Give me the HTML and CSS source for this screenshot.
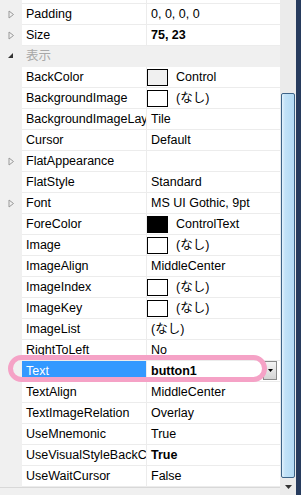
FILE: index.html
```html
<!DOCTYPE html>
<html lang="ja">

<head>
    <meta charset="UTF-8" />
    <title>Properties</title>
    <link rel="stylesheet" href="styles.css">
</head>

<body>
    <div class="window">
        <div class="grid">
            <div class="rows">
                <div class="row partial">
                    <span class="gutter"></span>
                    <span class="name"></span>
                    <span class="value"></span>
                </div>
                <div class="row">
                    <span class="gutter"><svg class="expander" width="7" height="9" viewBox="0 0 7 9"><polygon points="1,1 5.5,4.5 1,8" /></svg></span>
                    <span class="name">Padding</span>
                    <span class="value">0, 0, 0, 0</span>
                </div>
                <div class="row">
                    <span class="gutter"><svg class="expander" width="7" height="9" viewBox="0 0 7 9"><polygon points="1,1 5.5,4.5 1,8" /></svg></span>
                    <span class="name">Size</span>
                    <span class="value bold">75, 23</span>
                </div>
                <div class="row category">
                    <span class="gutter"><svg class="collapser" width="6" height="6" viewBox="0 0 6 6"><polygon points="5,0 5,5 0,5" /></svg></span>
                    <span class="catname">表示</span>
                </div>
                <div class="row">
                    <span class="gutter"></span>
                    <span class="name">BackColor</span>
                    <span class="value"><i class="swatch control"></i>Control</span>
                </div>
                <div class="row">
                    <span class="gutter"></span>
                    <span class="name">BackgroundImage</span>
                    <span class="value"><i class="swatch"></i>(なし)</span>
                </div>
                <div class="row">
                    <span class="gutter"></span>
                    <span class="name">BackgroundImageLayout</span>
                    <span class="value">Tile</span>
                </div>
                <div class="row">
                    <span class="gutter"></span>
                    <span class="name">Cursor</span>
                    <span class="value">Default</span>
                </div>
                <div class="row">
                    <span class="gutter"><svg class="expander" width="7" height="9" viewBox="0 0 7 9"><polygon points="1,1 5.5,4.5 1,8" /></svg></span>
                    <span class="name">FlatAppearance</span>
                    <span class="value"></span>
                </div>
                <div class="row">
                    <span class="gutter"></span>
                    <span class="name">FlatStyle</span>
                    <span class="value">Standard</span>
                </div>
                <div class="row">
                    <span class="gutter"><svg class="expander" width="7" height="9" viewBox="0 0 7 9"><polygon points="1,1 5.5,4.5 1,8" /></svg></span>
                    <span class="name">Font</span>
                    <span class="value">MS UI Gothic, 9pt</span>
                </div>
                <div class="row">
                    <span class="gutter"></span>
                    <span class="name">ForeColor</span>
                    <span class="value"><i class="swatch black"></i>ControlText</span>
                </div>
                <div class="row">
                    <span class="gutter"></span>
                    <span class="name">Image</span>
                    <span class="value"><i class="swatch"></i>(なし)</span>
                </div>
                <div class="row">
                    <span class="gutter"></span>
                    <span class="name">ImageAlign</span>
                    <span class="value">MiddleCenter</span>
                </div>
                <div class="row">
                    <span class="gutter"></span>
                    <span class="name">ImageIndex</span>
                    <span class="value"><i class="swatch"></i>(なし)</span>
                </div>
                <div class="row">
                    <span class="gutter"></span>
                    <span class="name">ImageKey</span>
                    <span class="value"><i class="swatch"></i>(なし)</span>
                </div>
                <div class="row">
                    <span class="gutter"></span>
                    <span class="name">ImageList</span>
                    <span class="value">(なし)</span>
                </div>
                <div class="row">
                    <span class="gutter"></span>
                    <span class="name">RightToLeft</span>
                    <span class="value">No</span>
                </div>
                <div class="row selected">
                    <span class="gutter"></span>
                    <span class="name">Text</span>
                    <span class="value bold">button1<span class="dropBtn"><svg width="5" height="3" viewBox="0 0 5 3"><polygon points="0,0 5,0 2.5,3" /></svg></span></span>
                </div>
                <div class="row">
                    <span class="gutter"></span>
                    <span class="name">TextAlign</span>
                    <span class="value">MiddleCenter</span>
                </div>
                <div class="row">
                    <span class="gutter"></span>
                    <span class="name">TextImageRelation</span>
                    <span class="value">Overlay</span>
                </div>
                <div class="row">
                    <span class="gutter"></span>
                    <span class="name">UseMnemonic</span>
                    <span class="value">True</span>
                </div>
                <div class="row">
                    <span class="gutter"></span>
                    <span class="name">UseVisualStyleBackColor</span>
                    <span class="value bold">True</span>
                </div>
                <div class="row">
                    <span class="gutter"></span>
                    <span class="name">UseWaitCursor</span>
                    <span class="value">False</span>
                </div>
            </div>
            <div class="footer"></div>
            <!-- pink annotation drawn over the Text row -->
            <div class="highlight"></div>
        </div>
        <div class="scrollbar">
            <div class="track"></div>
            <div class="thumb"></div>
            <div class="arrowBtn"><svg width="7" height="4" viewBox="0 0 7 4"><polygon points="0,0 7,0 3.5,4" /></svg></div>
        </div>
        <div class="frame"></div>
    </div>
</body>

</html>
```

FILE: styles.css
```css
:root {
    --sys-gray: #f0f0f0;
    --line: #ececec;
    --select: #3399ff;
    --pink: #f5a2c6;
    --frame: #273b5d;
    --base-font: "Liberation Sans", "Noto Sans CJK JP", sans-serif;
}

html,
body {
    margin: 0;
    padding: 0;
    height: 100%;
    overflow: hidden;
    background: #fff;
    font-family: var(--base-font);
    font-size: 12.5px;
    color: #000;
}

.window {
    display: flex;
    height: 495px;
}

.grid {
    position: relative;
    width: 280px;
    display: flex;
    flex-direction: column;
}

.rows {
    display: flex;
    flex-direction: column;
}

.row {
    display: grid;
    grid-template-columns: 22px 125px 133px;
    height: 21px;
}

.row.partial {
    height: 4px;
}

.row > span {
    box-sizing: border-box;
    border-bottom: 1px solid var(--line);
    white-space: nowrap;
    overflow: hidden;
    line-height: 20px;
}

.row .gutter {
    background: var(--sys-gray);
    border-bottom-color: var(--sys-gray);
    display: flex;
    align-items: center;
    justify-content: center;
}

.row .name {
    padding-left: 4px;
    border-right: 1px solid var(--line);
    text-overflow: clip;
}

.row .value {
    padding-left: 4px;
    display: flex;
    align-items: center;
    position: relative;
}

.bold {
    font-weight: bold;
}

.expander {
    fill: none;
    stroke: #9a9a9a;
    stroke-width: 1;
}

.collapser {
    fill: #333;
}

.row.category .catname {
    grid-column: 2 / 4;
    background: var(--sys-gray);
    border-bottom-color: var(--sys-gray);
    color: #a8a8a8;
    padding-left: 4px;
}

.swatch {
    display: inline-block;
    box-sizing: border-box;
    width: 21px;
    height: 17px;
    margin-left: -4px;
    margin-right: 8px;
    border: 1px solid #000;
    background: #fff;
}

.swatch.control {
    background: var(--sys-gray);
}

.swatch.black {
    background: #000;
}

.row.selected .name {
    background: var(--select);
    color: #fff;
}

.dropBtn {
    position: absolute;
    right: 3px;
    top: 0;
    width: 14px;
    height: 19px;
    box-sizing: border-box;
    border: 1px solid #8a8a8a;
    background: linear-gradient(#f4f4f4, #d4d4d4);
    display: flex;
    align-items: center;
    justify-content: center;
}

.footer {
    flex: 1;
    background: var(--sys-gray);
    border-top: 1px solid #d8d8d8;
}

.highlight {
    position: absolute;
    left: 8px;
    top: 355px;
    width: 259px;
    height: 27px;
    box-sizing: border-box;
    border: 5px solid var(--pink);
    border-radius: 14px;
    pointer-events: none;
}

.scrollbar {
    width: 16px;
    display: flex;
    flex-direction: column;
    background: #ebebeb;
    padding-left: 1px;
    box-sizing: border-box;
}

.track {
    height: 93px;
}

.thumb {
    flex: 1;
    width: 14px;
    box-sizing: border-box;
    border: 1px solid #3d6387;
    border-radius: 2px;
    background: linear-gradient(90deg, #e3f2fc 0, #c2e2f7 3px, #b3daf4 100%);
}

.arrowBtn {
    height: 17px;
    width: 14px;
    display: flex;
    align-items: center;
    justify-content: center;
    fill: #333;
}

.frame {
    width: 5px;
    background: var(--frame);
}
```
